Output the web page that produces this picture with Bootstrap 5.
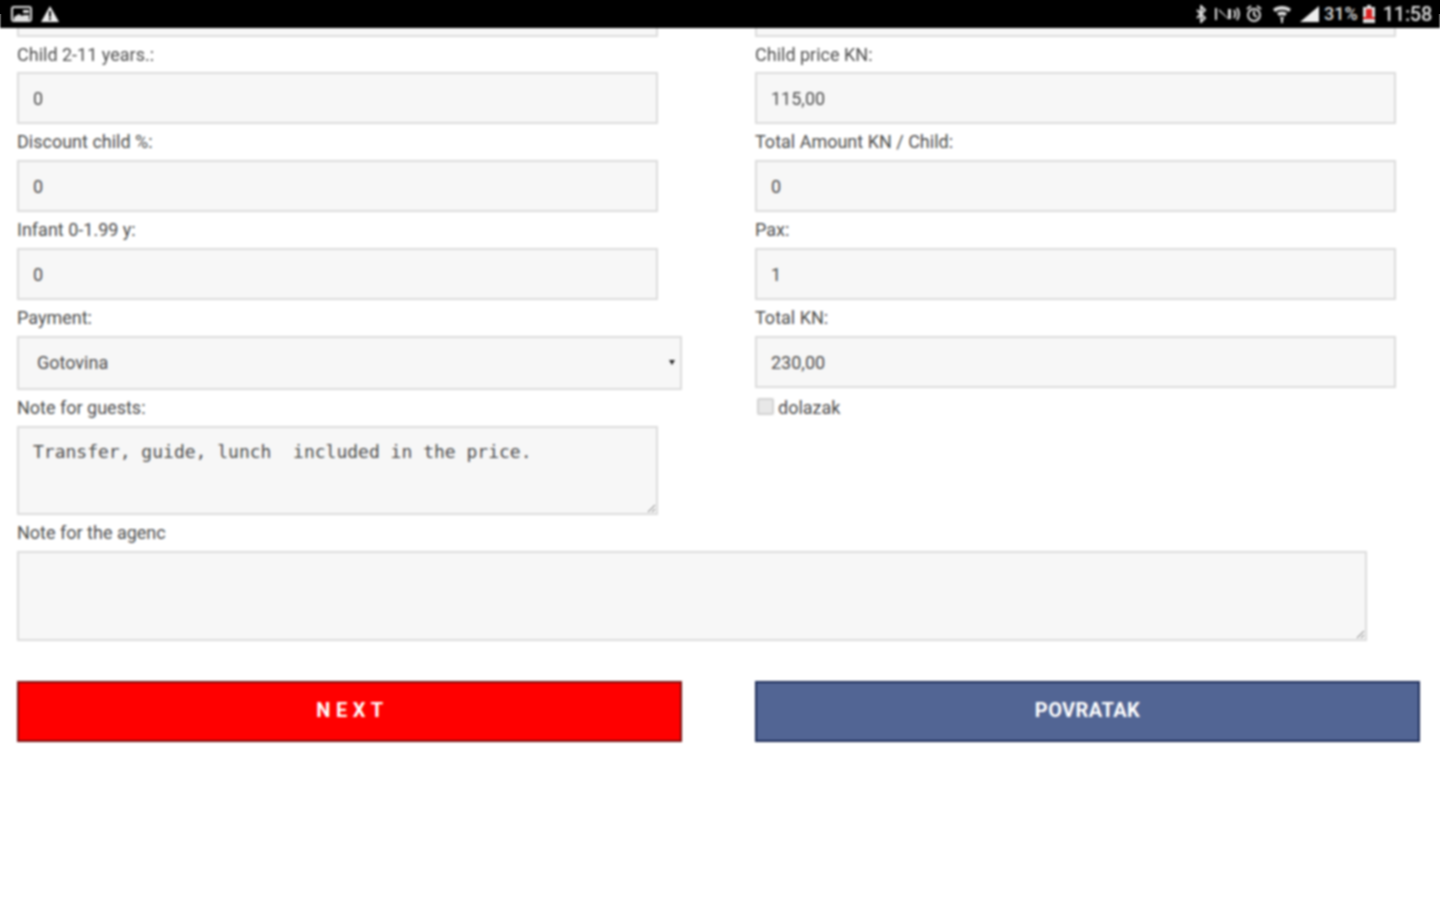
<!DOCTYPE html>
<html lang="en">
  <head>
    <meta charset="UTF-8" />
    <meta name="viewport" content="width=device-width, initial-scale=1" />
    <title>Booking form</title>
    <link href="https://cdn.jsdelivr.net/npm/bootstrap@5.3.3/dist/css/bootstrap.min.css" rel="stylesheet" />
    <style>
      html, body { height: 900px; overflow: hidden; }
      body { font-family: Roboto, "Liberation Sans", sans-serif; color: #4d4d4d; background: linear-gradient(#000 0 14px, #fff 14px); }
      .page-blur { filter: blur(0.9px); height: 900px; }
      .status-strip { height: 28px; background: #000; color: #ddd; padding: 0 8px 0 11px; }
      .status-text { font-size: 20px; line-height: 32px; font-weight: 500; letter-spacing: -.3px; }
      .status-pct { font-size: 18px; line-height: 28px; font-weight: 500; }
      .form-area { padding: 0 20px 0 17px; background: #fff; }
      .two-cols { display: grid; grid-template-columns: 665px 665px; column-gap: 73px; }
      .stub-field { height: 9px; width: 641px; background: #f7f7f7; border: 2px solid #dcdcdc; border-top: 0; }
      .field-label { font-size: 18px; line-height: 36px; height: 36px; color: #4d4d4d; margin: 0; display: block; }
      .label-first { line-height: 35px; height: 35px; }
      .field-input { display: block; width: 641px; height: 52px; background: #f7f7f7; border: 2px solid #dcdcdc; border-radius: 0; padding: 0 14px; font-size: 18px; color: #4d4d4d; box-shadow: none; }
      .field-input.select-field { width: 665px; height: 54px; padding: 0 18px 2px; background-image: none; }
      .select-wrap { position: relative; }
      .select-caret { position: absolute; right: 7px; top: 24px; width: 0; height: 0; border: 3.5px solid transparent; border-top: 5px solid #222; border-bottom: 0; }
      .note-area { display: block; background: #f7f7f7; border: 2px solid #dcdcdc; border-radius: 0; padding: 12px 14px; font-family: "DejaVu Sans Mono", monospace; font-size: 18px; line-height: 24px; color: #4d4d4d; resize: both; outline: 0; }
      .note-guests { width: 641px; height: 89px; }
      .note-agency { width: 1350px; height: 90px; }
      .arrive-row { height: 36px; padding-left: 2px; }
      .arrive-check { width: 17px; height: 17px; margin: -3px 0 0 0; background: #e8e8e8; border: 2px solid #d2d2d2; border-radius: 2px; flex: none; appearance: none; }
      .action-btn { height: 61px; border-radius: 0; border: 2px solid; color: #fff; font-weight: 700; font-size: 20px; padding: 0 0 3px; }
      .btn-next { background: #ff0000; border-color: #7a1010; letter-spacing: 5.5px; padding-left: 6px; }
      .btn-back { background: #526594; border-color: #1d2c58; letter-spacing: .4px; }
      .btn-next:hover, .btn-next:active { background: #ff0000; border-color: #7a1010; color: #fff; }
      .btn-back:hover, .btn-back:active { background: #526594; border-color: #1d2c58; color: #fff; }
      .gap-buttons { margin-top: 40px; }
    </style>
  </head>
  <body>
    <div class="page-blur">

      <!-- Status bar -->
      <div class="status-strip d-flex align-items-center justify-content-between">
        <div class="d-flex align-items-center gap-1">
          <svg class="me-1" width="21" height="18" viewBox="0 0 21 18"><rect x="1" y="2" width="19" height="14" rx="2" fill="none" stroke="#ddd" stroke-width="2"/><path d="M3 12l5-3 3 2 2-1 5 0v5H3z" fill="#ddd"/><rect x="12" y="5" width="6" height="3" fill="#ddd"/></svg>
          <svg width="20" height="18" viewBox="0 0 20 18"><path d="M10 1L19 17H1z" fill="#eee"/><rect x="9" y="6" width="2" height="6" fill="#000"/><rect x="9" y="13" width="2" height="2" fill="#000"/></svg>
        </div>
        <div class="d-flex align-items-center">
          <svg style="margin-right:7px" width="14" height="18" viewBox="0 0 14 18"><path d="M3 5l8 8-4 4V1l4 4-8 8" fill="none" stroke="#ddd" stroke-width="2"/></svg>
          <svg style="margin-right:6px" width="25" height="18" viewBox="0 0 25 18"><path d="M1 3v12" stroke="#ddd" stroke-width="2"/><path d="M4 4l9 9V4l3 0v10h-3L4 6z" fill="#ddd"/><path d="M19 5c1.500 2.500 1.500 5.500 0 8M22 3c2.500 4 2.500 8 0 12" fill="none" stroke="#ddd" stroke-width="2"/></svg>
          <svg style="margin-right:10px" width="16" height="18" viewBox="0 0 16 18"><circle cx="8" cy="10" r="6" fill="none" stroke="#ddd" stroke-width="2"/><path d="M8 6v4l3 2M1 4l4-3M15 4l-4-3" fill="none" stroke="#ddd" stroke-width="2"/></svg>
          <svg style="margin-right:7px" width="20" height="20" viewBox="0 0 20 20"><path d="M1 5c5-4 13-4 18 0l-2 3c-4-3-10-3-14 0zM5 9c3-2 7-2 10 0l-2 3c-2-1-4-1-6 0z" fill="#ddd"/><path d="M8 13h4l-1 3h-2z" fill="#ddd"/><rect x="9" y="16" width="2" height="3" fill="#ddd"/></svg>
          <svg style="margin-right:4px" width="21" height="18" viewBox="0 0 21 18"><path d="M1 17L20 1v16z" fill="#eee"/></svg>
          <span class="status-pct">31%</span>
          <svg style="margin:0 7px 0 4px" width="14" height="20" viewBox="0 0 14 20"><rect x="5" y="1" width="4" height="2" fill="#ddd"/><rect x="1" y="3" width="12" height="16" fill="#ddd"/><rect x="4" y="5" width="6" height="8" fill="#d22"/><rect x="1" y="13" width="12" height="2" fill="#d22"/></svg>
          <span class="status-text">11:58</span>
        </div>
      </div>

      <form class="form-area">
        <div class="two-cols">
          <div class="stub-field"></div>
          <div class="stub-field"></div>
        </div>

        <div class="two-cols">
          <div>
            <label class="field-label label-first">Child 2-11 years.:</label>
            <input type="text" class="form-control field-input" value="0" readonly />
          </div>
          <div>
            <label class="field-label label-first">Child price KN:</label>
            <input type="text" class="form-control field-input" value="115,00" readonly />
          </div>

          <div>
            <label class="field-label">Discount child %:</label>
            <input type="text" class="form-control field-input" value="0" readonly />
          </div>
          <div>
            <label class="field-label">Total Amount KN / Child:</label>
            <input type="text" class="form-control field-input" value="0" readonly />
          </div>

          <div>
            <label class="field-label">Infant 0-1.99 y:</label>
            <input type="text" class="form-control field-input" value="0" readonly />
          </div>
          <div>
            <label class="field-label">Pax:</label>
            <input type="text" class="form-control field-input" value="1" readonly />
          </div>

          <div>
            <label class="field-label">Payment:</label>
            <div class="select-wrap">
              <select class="form-select field-input select-field">
                <option>Gotovina</option>
              </select>
              <span class="select-caret"></span>
            </div>
          </div>
          <div>
            <label class="field-label">Total KN:</label>
            <input type="text" class="form-control field-input" value="230,00" readonly />
          </div>

          <div>
            <label class="field-label">Note for guests:</label>
            <textarea class="form-control note-area note-guests" readonly>Transfer, guide, lunch  included in the price.</textarea>
          </div>
          <div class="arrive-row d-flex align-items-center gap-1">
            <input type="checkbox" class="arrive-check" />
            <span class="field-label">dolazak</span>
          </div>
        </div>

        <label class="field-label">Note for the agenc</label>
        <textarea class="form-control note-area note-agency" readonly></textarea>

        <div class="two-cols gap-buttons">
          <button type="button" class="btn action-btn btn-next">NEXT</button>
          <button type="button" class="btn action-btn btn-back">POVRATAK</button>
        </div>
      </form>
    </div>
    <script src="https://cdn.jsdelivr.net/npm/bootstrap@5.3.3/dist/js/bootstrap.bundle.min.js"></script>
  </body>
</html>
